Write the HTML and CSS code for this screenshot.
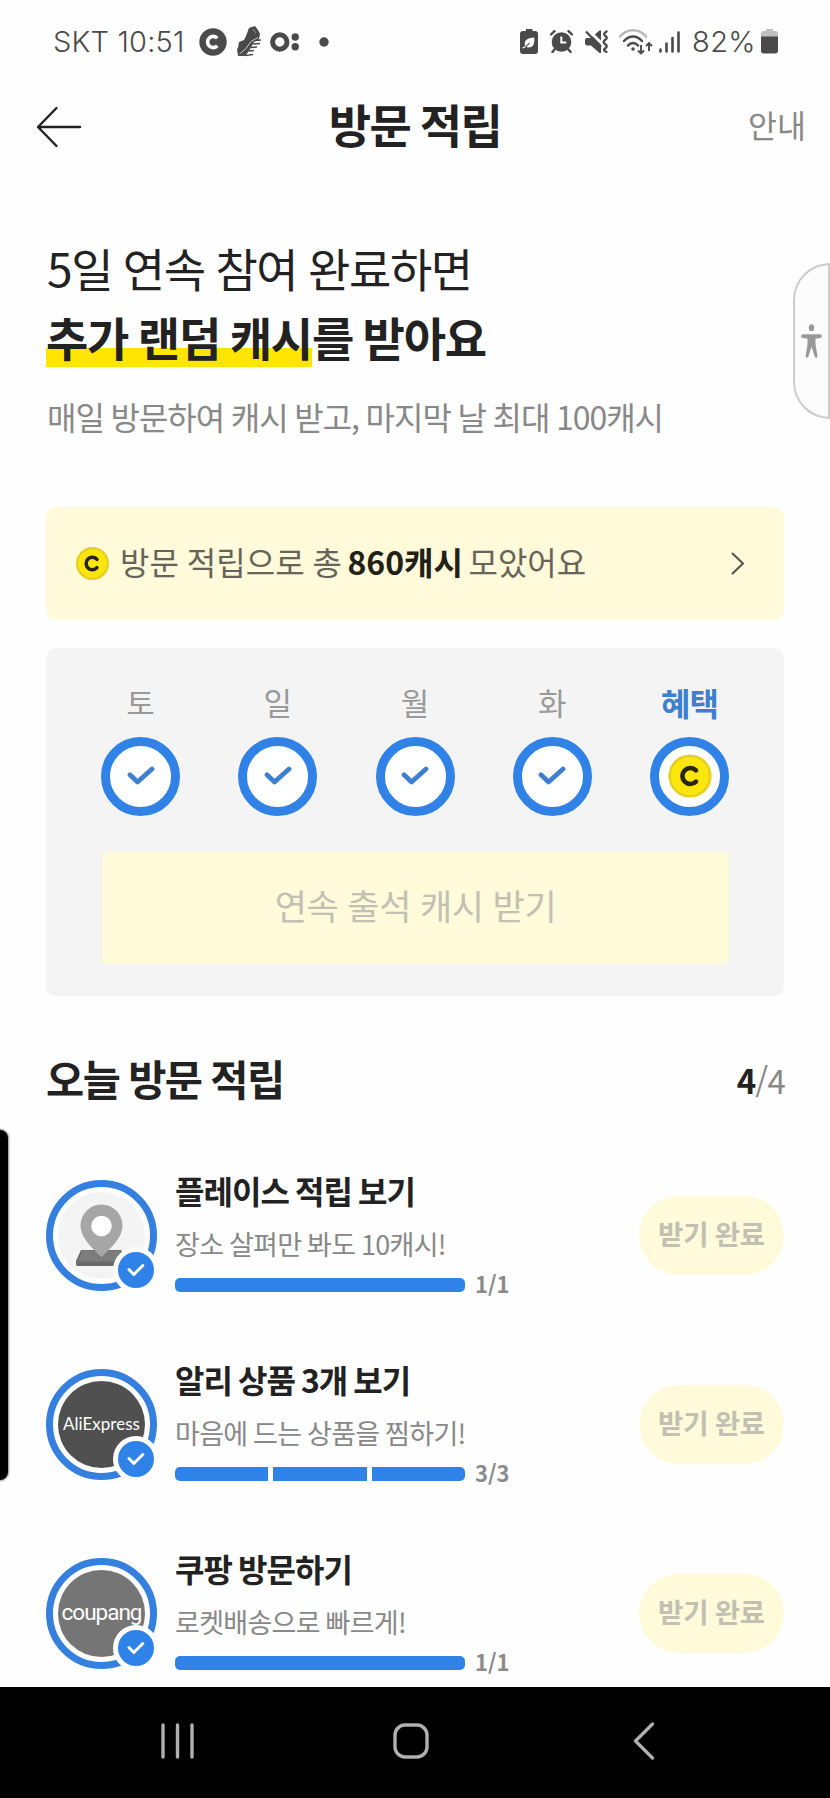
FILE: index.html
```html
<!DOCTYPE html>
<html lang="ko">
<head>
<meta charset="utf-8">
<title>방문 적립</title>
<link rel="stylesheet" href="styles.css">
</head>
<body>
<div class="app">
  <div class="status">
    <span class="status-text clock">SKT 10:51</span>
    <svg class="ic-cash" width="28" height="28" viewBox="0 0 28 28"><circle cx="14" cy="14" r="13.7" fill="#4a4a4a"/><path d="M18.3 10.2A5.6 5.6 0 1 0 18.3 17.8" fill="none" stroke="#fff" stroke-width="3.6"/></svg>
    <svg class="ic-shoe" width="25" height="31" viewBox="0 0 25 31"><path d="M12 2 L18 0 L21 4 L23 8 L22 13 L17 16 L12 25 L8 30 L1 30 L0 23 L1 22 L2 16 L7 14 L9 10 Z" fill="#4a4a4a"/><path d="M2.500 28 9 22.500 14 15.500 21 11.500" fill="none" stroke="#ccc" stroke-width="1"/><path d="M16 3 19 7" stroke="#999" stroke-width="1" fill="none"/><path d="M18 14.500 L24 14 M16 18 L23 17.500 M14 21.500 L20 21 M12 25 L17 24.500 M8 29.500 L16 28.500" stroke="#4a4a4a" stroke-width="1.500"/></svg>
    <svg class="ic-dots" width="30" height="20" viewBox="0 0 30 20"><circle cx="9.800" cy="10" r="7.200" fill="none" stroke="#4a4a4a" stroke-width="5"/><circle cx="25.200" cy="5" r="3.700" fill="#4a4a4a"/><circle cx="25.200" cy="14.800" r="3.700" fill="#4a4a4a"/></svg>
    <svg class="ic-more" width="10" height="10" viewBox="0 0 10 10"><circle cx="5" cy="5" r="4.700" fill="#4a4a4a"/></svg>
    <span class="status-fill"></span>
    <svg class="ic-leaf" width="18" height="25" viewBox="0 0 18 25"><path d="M6 0h6.500v2H15a3 3 0 0 1 3 3v17a3 3 0 0 1-3 3H3a3 3 0 0 1-3-3V5a3 3 0 0 1 3-3h3z" fill="#4a4a4a"/><path d="M14.200 8.500c.8 6-1 10-5.500 10-1.800 0-3-.6-3.500-1.400l-.5-2.400C5 10.500 8.200 8.900 14.200 8.500" fill="#fff"/><path d="M2.500 19c2.500-.7 5-2.300 7-5" stroke="#4a4a4a" stroke-width="1.200" fill="none"/><path d="M2.500 18.800c1 0 2-.6 3-1.300" stroke="#fff" stroke-width="1.300" fill="none"/></svg>
    <svg class="ic-alarm" width="23" height="23" viewBox="0 0 23 23"><circle cx="11.500" cy="12" r="9.800" fill="#4a4a4a"/><path d="M1 4.500 4.500 1.200M22 4.500 18.500 1.200" stroke="#4a4a4a" stroke-width="2.400" stroke-linecap="round"/><path d="M4.500 19.500 2.500 22M18.500 19.500l2 2.500" stroke="#4a4a4a" stroke-width="2.400" stroke-linecap="round"/><path d="M11.300 6.500v6h5" fill="none" stroke="#fff" stroke-width="2"/></svg>
    <svg class="ic-mute" width="24" height="24" viewBox="0 0 24 24"><path d="M0 9.500 1.500 8H6l8.500-7.500h1.500v22.500h-1.500L6 15.500H1.500L0 14z" fill="#4a4a4a"/><path d="M3 0 19 15.500" stroke="#fff" stroke-width="3"/><path d="M1 1.500 16 17" stroke="#4a4a4a" stroke-width="2.200"/><path d="M21.500 1.500c-3 2 -3 3-1 4.500s1.500 2.500-.5 4 -1.500 3 .5 4.500 1.500 2.500-.5 4 0 3 1.500 3.500" fill="none" stroke="#4a4a4a" stroke-width="2.300" stroke-linecap="round"/></svg>
    <svg class="ic-wifi" width="34" height="26" viewBox="0 0 34 26"><path d="M1 7.500C8 -.8 20 -.8 27 7.500" fill="none" stroke="#b8b8b8" stroke-width="2.500" stroke-linecap="round"/><path d="M5 12c5.500-6 12.500-6 18 0M9 16.500c3-3.500 7-3.500 10 0" fill="none" stroke="#4a4a4a" stroke-width="2.500" stroke-linecap="round"/><circle cx="14" cy="20" r="1.800" fill="#4a4a4a"/><path d="M22 16v8.500m-3-3 3 3 3-3M30 22v-8m-3 3 3-3 3 3" fill="none" stroke="#4a4a4a" stroke-width="1.900"/></svg>
    <svg class="ic-signal" width="21" height="22" viewBox="0 0 21 22"><path d="M1.500 18.500v2M7.500 12.500v8M13.500 7v13.500M19.500 1.500v19" stroke="#4a4a4a" stroke-width="2.600" stroke-linecap="round"/></svg>
    <span class="status-text percent">82%</span>
    <svg class="ic-battery" width="17" height="25" viewBox="0 0 17 25"><path d="M5 0h7v2h2.500A2.500 2.500 0 0 1 17 4.500V8H0V4.500A2.500 2.500 0 0 1 2.500 2H5z" fill="#c0c0c0"/><path d="M0 7.500h17v14a3 3 0 0 1-3 3H3a3 3 0 0 1-3-3z" fill="#4a4a4a"/></svg>
  </div>

  <header class="topbar">
    <svg class="back" width="46" height="42" viewBox="0 0 46 42"><path d="M44 21H2M20.500 2 2 21l18.500 19" fill="none" stroke="#222" stroke-width="2.400" stroke-linecap="round" stroke-linejoin="round"/></svg>
    <div class="topbar-title">방문 적립</div>
    <div class="topbar-link">안내</div>
  </header>

  <main class="main">
    <h1 class="hero">5일 연속 참여 완료하면<br><b><span class="mark">추가 랜덤 캐시</span>를 받아요</b></h1>
    <p class="hero-sub">매일 방문하여 캐시 받고, 마지막 날 최대 100캐시</p>

    <a class="banner">
      <svg class="coin" width="33" height="33" viewBox="0 0 44 44"><circle cx="22" cy="22" r="20.500" fill="#ffe60a" stroke="#e3cf25" stroke-width="3"/><path d="M28 16.500A8.300 8.300 0 1 0 28 27.500" fill="none" stroke="#262410" stroke-width="4.600" stroke-linecap="round"/></svg>
      <span class="banner-text">방문 적립으로 총 <b>860캐시</b> 모았어요</span>
      <svg width="14" height="23" viewBox="0 0 14 23"><path d="M1.500 1.500 12 11.500 1.500 21.500" fill="none" stroke="#55534a" stroke-width="2" stroke-linecap="round" stroke-linejoin="round"/></svg>
    </a>

    <section class="streak">
      <div class="days">
        <div class="day"><span>토</span><i class="ring"><svg width="28" height="20" viewBox="0 0 28 20"><path d="M3 8.800 10.500 16 25 3" /></svg></i></div>
        <div class="day"><span>일</span><i class="ring"><svg width="28" height="20" viewBox="0 0 28 20"><path d="M3 8.800 10.500 16 25 3" /></svg></i></div>
        <div class="day"><span>월</span><i class="ring"><svg width="28" height="20" viewBox="0 0 28 20"><path d="M3 8.800 10.500 16 25 3" /></svg></i></div>
        <div class="day"><span>화</span><i class="ring"><svg width="28" height="20" viewBox="0 0 28 20"><path d="M3 8.800 10.500 16 25 3" /></svg></i></div>
        <div class="day bonus"><span>혜택</span><i class="ring"><svg class="coin-big" width="44" height="44" viewBox="0 0 44 44"><circle cx="22" cy="22" r="20.300" fill="#ffe60a" stroke="#e3cf25" stroke-width="2.600"/><path d="M28 16.300A8 8 0 1 0 28 27.700" fill="none" stroke-linecap="round"/></svg></i></div>
      </div>
      <button class="claim">연속 출석 캐시 받기</button>
    </section>

    <div class="section-head">
      <h2>오늘 방문 적립</h2>
      <span class="count"><b>4</b>/4</span>
    </div>

    <ul class="missions">
      <li class="mission">
        <div class="avatar">
          <div class="disc place"><svg width="50" height="62" viewBox="0 0 50 62"><path d="M5 46h40l4 11v3.500a1.500 1.500 0 0 1-1.500 1.500h-45A2 2 0 0 1 0 60v-3z" fill="#6a6a6a"/><path d="M6.500 46.500h37l4 11h-46z" fill="#7c7c7c"/><path d="M25.500 53.500C19 46 4.500 35 4.500 21.500a21 21 0 0 1 42 0C46.500 35 32 46 25.500 53.500z" fill="#a6a6a6"/><circle cx="25.500" cy="22" r="10.300" fill="#fff"/></svg></div>
          <i class="done"><svg width="18" height="14" viewBox="0 0 18 14"><path d="M2 6.500 6.800 11.500 15.800 2.500"/></svg></i>
        </div>
        <div class="info">
          <div class="name">플레이스 적립 보기</div>
          <div class="desc">장소 살펴만 봐도 10캐시!</div>
          <div class="progress"><div class="bar"><i></i></div><span>1/1</span></div>
        </div>
        <button class="pill">받기 완료</button>
      </li>
      <li class="mission">
        <div class="avatar">
          <div class="disc ali"><span>AliExpress</span></div>
          <i class="done"><svg width="18" height="14" viewBox="0 0 18 14"><path d="M2 6.500 6.800 11.500 15.800 2.500"/></svg></i>
        </div>
        <div class="info">
          <div class="name">알리 상품 3개 보기</div>
          <div class="desc">마음에 드는 상품을 찜하기!</div>
          <div class="progress"><div class="bar"><i></i><i></i><i></i></div><span>3/3</span></div>
        </div>
        <button class="pill">받기 완료</button>
      </li>
      <li class="mission">
        <div class="avatar">
          <div class="disc coupang"><span>coupang</span></div>
          <i class="done"><svg width="18" height="14" viewBox="0 0 18 14"><path d="M2 6.500 6.800 11.500 15.800 2.500"/></svg></i>
        </div>
        <div class="info">
          <div class="name">쿠팡 방문하기</div>
          <div class="desc">로켓배송으로 빠르게!</div>
          <div class="progress"><div class="bar"><i></i></div><span>1/1</span></div>
        </div>
        <button class="pill">받기 완료</button>
      </li>
    </ul>
  </main>

  <nav class="navbar">
    <svg width="34" height="36" viewBox="0 0 34 36"><path d="M2 2v32M16.500 2v32M31 2v32" stroke="#b0b0b0" stroke-width="3.400" stroke-linecap="round"/></svg>
    <svg class="home" width="36" height="36" viewBox="0 0 36 36"><rect x="2" y="2" width="32" height="32" rx="10" fill="none" stroke="#b0b0b0" stroke-width="3.400"/></svg>
    <svg width="22" height="38" viewBox="0 0 22 38"><path d="M19.500 2 2.500 19l17 17" fill="none" stroke="#b0b0b0" stroke-width="3.200" stroke-linecap="round" stroke-linejoin="round"/></svg>
  </nav>

  <div class="edge-panel"></div>
  <div class="edge-handle"><svg width="21" height="34" viewBox="0 0 21 34"><ellipse cx="10.500" cy="3.800" rx="2.700" ry="3.500" fill="#999"/><path d="M2 10.200h17a1.800 1.800 0 0 1 0 3.800l-4.500.8v5.200l2 12.500a1.400 1.400 0 0 1-2.600.6L10.500 23 7.200 33.100a1.400 1.400 0 0 1-2.600-.6L6.500 20v-5.200L2 14a1.800 1.800 0 0 1 0-3.800z" fill="#999"/></svg></div>
</div>
</body>
</html>
```
FILE: styles.css
```css
* { box-sizing: border-box; }
body {
  margin: 0;
  background: #fefefe;
  color: #222;
  font-family: "Noto Sans CJK KR", "Noto Sans", sans-serif;
}
button { border: 0; padding: 0; font-family: inherit; }
i { font-style: normal; }
svg { display: block; flex: none; }

.app {
  position: relative;
  display: flex;
  flex-direction: column;
  width: 830px;
  height: 1798px;
  overflow: hidden;
  background: #fefefe;
}

/* status bar */
.status {
  flex: none;
  display: flex;
  align-items: center;
  height: 83px;
  padding-left: 53px;
  padding-right: 52px;
}
.status-text {
  font: 350 29px/40px Inter, Roboto, sans-serif;
  color: #4a4a4a;
  white-space: nowrap;
}
.clock { width: 146px; letter-spacing: 0.2px; }
.ic-shoe { margin-left: 10px; }
.ic-dots { margin-left: 8px; }
.ic-more { margin-left: 19px; }
.status-fill { flex: 1; }
.ic-alarm { margin-left: 12px; }
.ic-mute { margin-left: 12px; }
.ic-wifi { margin-left: 10px; }
.ic-signal { margin-left: 6px; }
.percent { width: 68px; margin-left: 12px; letter-spacing: 0.4px; }
.ic-battery { margin-left: 1px; }

/* title bar */
.topbar {
  flex: none;
  display: grid;
  grid-template-columns: 1fr auto 1fr;
  align-items: center;
  height: 84px;
  padding: 0 24px 0 36px;
}
.back { margin-top: 3px; }
.topbar-title {
  font-size: 46px;
  line-height: 60px;
  font-weight: 700;
  letter-spacing: -1.5px;
  word-spacing: -2px;
  padding-bottom: 5px;
  margin-left: -12px;
}
.topbar-link {
  justify-self: end;
  font-size: 31.5px;
  line-height: 40px;
  padding-bottom: 2px;
  color: #888;
}

.main {
  flex: 1;
  min-height: 0;
  overflow: hidden;
  padding: 66px 46px 0;
}
.hero {
  margin: 0;
  font-size: 46px;
  line-height: 69px;
  font-weight: 400;
  letter-spacing: -1.4px;
  word-spacing: -0.7px;
  text-indent: 1px;
  white-space: nowrap;
}
.hero b { font-weight: 700; letter-spacing: -1.2px; word-spacing: -2.1px; }
.mark {
  display: inline-block;
  text-indent: 0;
  background: linear-gradient(#ffe500, #ffe500) 0 46px / 100% 19px no-repeat;
}
.hero-sub {
  margin: 22px 0 0 1px;
  font-size: 32px;
  line-height: 46px;
  letter-spacing: -1.05px;
  word-spacing: -1.2px;
  color: #888;
  white-space: nowrap;
}

/* total banner */
.banner {
  display: flex;
  align-items: center;
  height: 113px;
  margin-top: 68px;
  padding: 0 39px 0 30px;
  border-radius: 10px;
  background: #fffad9;
}
.banner-text {
  flex: 1;
  margin-left: 11px;
  padding-bottom: 5px;
  font-size: 32px;
  line-height: 46px;
  word-spacing: -1px;
  color: #66645a;
  white-space: nowrap;
}
.banner-text b { color: #222118; margin: 0 -2.5px; }

/* weekly streak */
.streak {
  height: 348px;
  margin-top: 28px;
  padding: 31px 55px 0;
  border-radius: 10px;
  background: #f4f4f5;
}
.days { display: flex; justify-content: space-between; }
.day {
  display: flex;
  flex-direction: column;
  align-items: center;
  width: 79px;
}
.day span {
  font-size: 31px;
  line-height: 46px;
  color: #999;
  white-space: nowrap;
}
.bonus span { font-size: 32px; font-weight: 700; letter-spacing: -1px; color: #3d80d0; }
.ring {
  display: flex;
  align-items: center;
  justify-content: center;
  width: 79px;
  height: 79px;
  margin-top: 12px;
  border: 9px solid #3082e6;
  border-radius: 50%;
  background: #fff;
}
.ring svg { margin-top: -1px; }
.ring path { fill: none; stroke: #3d80d0; stroke-width: 4.8; stroke-linecap: round; stroke-linejoin: round; }
.ring .coin-big path { stroke: #2a260c; stroke-width: 4.6; }
.claim {
  display: block;
  width: 627px;
  height: 112px;
  margin: 36px 0 0 1px;
  padding-bottom: 7px;
  border-radius: 4px;
  background: #fffad9;
  color: #c1c0b3;
  font-size: 35px;
  letter-spacing: -0.3px;
  word-spacing: -0.7px;
}

/* missions */
.section-head {
  display: flex;
  justify-content: space-between;
  align-items: center;
  height: 60px;
  margin-top: 52px;
}
.section-head h2 {
  margin: 0;
  font-size: 41.5px;
  line-height: 60px;
  font-weight: 700;
  letter-spacing: -1.5px;
  word-spacing: -1.3px;
}
.count {
  font-size: 33px;
  line-height: 60px;
  letter-spacing: -0.8px;
  color: #888;
  margin: 4px -1px 0 0;
}
.count b { color: #222; }
.missions { list-style: none; margin: 33px 0 0; padding: 0; }
.mission { display: flex; height: 189px; }
.avatar {
  position: relative;
  flex: none;
  width: 111px;
  height: 111px;
  margin-top: 39px;
  padding: 5px;
  border: 7px solid #3580de;
  border-radius: 50%;
  background: #fff;
}
.disc {
  display: flex;
  align-items: center;
  justify-content: center;
  width: 87px;
  height: 87px;
  border-radius: 50%;
  color: #fff;
  white-space: nowrap;
}
.place { background: #f4f4f4; padding-right: 1px; padding-bottom: 1px; }
.ali { background: #505050; font: 400 17px/20px Lato, sans-serif; padding-bottom: 2px; }
.coupang { background: #757575; font: 400 22.5px/26px Roboto, sans-serif; letter-spacing: -1px; padding-bottom: 3px; }
.done {
  position: absolute;
  left: 60px;
  top: 60px;
  display: flex;
  align-items: center;
  justify-content: center;
  width: 46px;
  height: 46px;
  border: 5px solid #fff;
  border-radius: 50%;
  background: #2f82e8;
}
.done path { fill: none; stroke: #fff; stroke-width: 3; stroke-linecap: round; stroke-linejoin: round; }
.info { flex: 1; margin-left: 18px; padding-top: 26px; white-space: nowrap; }
.name {
  font-size: 32px;
  line-height: 46px;
  font-weight: 700;
  letter-spacing: -0.9px;
  word-spacing: -2.2px;
}
.desc {
  margin-top: 11px;
  font-size: 27px;
  line-height: 40px;
  letter-spacing: -0.7px;
  word-spacing: -1.2px;
  color: #888;
}
.progress { display: flex; align-items: center; height: 24px; margin-top: 9px; }
.bar {
  display: flex;
  gap: 5px;
  width: 290px;
  height: 14px;
  border-radius: 5px;
  overflow: hidden;
}
.bar i { flex: 1; background: #2f82e8; }
.progress span {
  margin-left: 10px;
  padding-bottom: 4px;
  font-size: 22px;
  line-height: 24px;
  font-weight: 700;
  color: #8a8a8a;
}
.pill {
  flex: none;
  width: 145px;
  height: 79px;
  margin: 55px 0 0 0;
  padding-bottom: 6px;
  border-radius: 40px;
  background: #fffad9;
  color: #c1c0b3;
  font-size: 27.5px;
  font-weight: 700;
  letter-spacing: -0.2px;
  word-spacing: -1px;
}

/* system navigation */
.navbar {
  flex: none;
  display: flex;
  align-items: center;
  justify-content: space-between;
  height: 111px;
  padding: 0 175px 3px 161px;
  background: #000;
}
.home { margin-right: 7px; }

.edge-panel {
  position: absolute;
  left: -10px;
  top: 1130px;
  width: 18px;
  height: 350px;
  border-radius: 8px;
  background: #000;
  box-shadow: 0 0 2px 1px rgba(0, 0, 0, .45);
}
.edge-handle {
  position: absolute;
  left: 793px;
  top: 263px;
  display: flex;
  align-items: center;
  justify-content: center;
  width: 37px;
  height: 156px;
  border: 2px solid #ccc;
  border-radius: 37px 0 0 37px;
  background: #fcfcfc;
}
```
